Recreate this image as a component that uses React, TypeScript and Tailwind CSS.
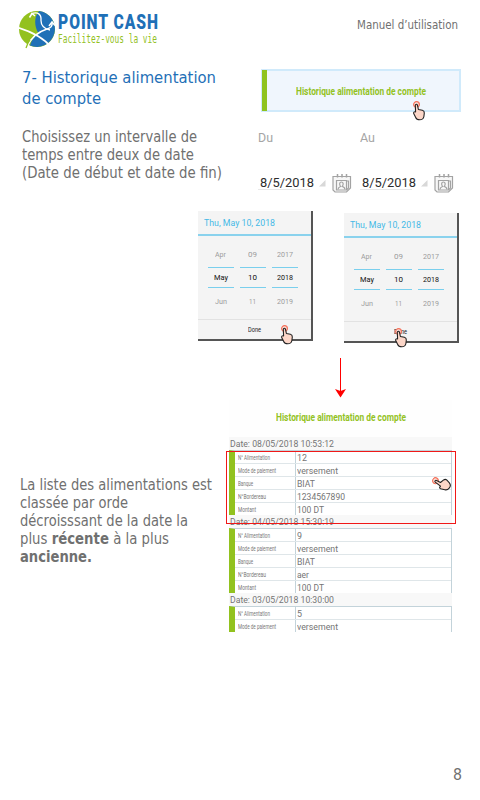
import { useLayoutEffect, useRef, useState } from "react";
import type { ReactNode } from "react";

const TAHOMA = "font-['DejaVu_Sans','Noto_Sans',sans-serif]";
const ROBOTO = "font-[Roboto,sans-serif]";

/** One line of text, condensed or widened horizontally to span `w` pixels. */
function Fit({ w, className = "", children }: { w: number; className?: string; children: ReactNode }) {
  const ref = useRef<HTMLSpanElement>(null);
  const [k, setK] = useState(1);
  useLayoutEffect(() => {
    const measure = () => {
      if (ref.current && ref.current.offsetWidth) {
        const probe = document.createRange();
        probe.selectNodeContents(ref.current);
        const before = ref.current.style.transform;
        ref.current.style.transform = "none";
        const natural = probe.getBoundingClientRect().width;
        ref.current.style.transform = before;
        setK(w / natural);
      }
    };
    measure();
    document.fonts?.ready.then(measure);
  }, [w]);
  return (
    <div className={`whitespace-nowrap ${className}`} style={{ width: w }}>
      <span ref={ref} className="inline-block origin-left align-top" style={{ transform: `scaleX(${k})` }}>
        {children}
      </span>
    </div>
  );
}

function Hand({ className }: { className: string }) {
  return (
    <svg className={`absolute ${className}`} width="14" height="20" viewBox="0 0 14 20">
      <circle cx="4.5" cy="3.6" r="2.900" fill="#fde0d8" stroke="#f4705a" strokeWidth="1.200" />
      <path
        d="M3.300 4.300c.1-1.300 1.900-1.400 2.200 0l.9 4.200 4 .8c1.400.4 2 1.300 1.900 2.700l-.4 3.500c-.4 2-1.900 3.300-4.200 3.300-2.100 0-3.400-.8-4-2.300L1.700 12.600c-.4-1.300.4-2.100 1.900-1.700Z"
        fill="#fcd6c8"
        stroke="#222"
        strokeWidth="1.100"
        strokeLinejoin="round"
      />
    </svg>
  );
}

function Logo() {
  return (
    <svg width="40" height="40" viewBox="0 0 40 40">
      <circle cx="19" cy="20" r="18" fill="#93c11f" />
      <path d="M21 2.100A18 18 0 1 1 12 36.600C14 30 17 27 20.500 24.500 16 17 16 8 21 2.100Z" fill="#1f70b7" />
      <path d="M0 18.500C13 22.500 25 28 33 38" fill="none" stroke="#fff" strokeWidth="1.700" />
      <path d="M9.500 37C14 27 21 22.500 29 20c4-1 5.500-3 5-6" fill="none" stroke="#fff" strokeWidth="1.600" />
      <path d="M13 5c7-3 10.500.5 10 6.500 0 5 2 8 9 9.500" fill="none" stroke="#fff" strokeWidth="1.300" />
      <path d="M11.500 8.500l2.500-4 3 2.500M31 17l3-4 3 3.500" fill="none" stroke="#fff" strokeWidth="1.500" />
      <path d="M8 39l2-5 2-3" fill="none" stroke="#93c11f" strokeWidth="1.300" />
    </svg>
  );
}

function CalendarIcon() {
  return (
    <svg width="20" height="20" viewBox="0 0 20 20" fill="none" stroke="#a3a3a3" strokeWidth="1.200">
      <path d="M1 3.500h17.500v11.500l-4 4H3l-2-2Z" fill="#f7f7f7" />
      <path d="M4.500 7.500h10v9.500h-10ZM14.500 8h2v7l-2 2" />
      <path d="M6 16.500c0-2 1-2.500 2.500-3-1.600-2.600-.8-4.500.9-4.500s2.500 1.900.9 4.500c1.600.5 2.600 1 2.600 3" />
      <path d="M5.500 1v3.500M10 1v3.500M14.500 1v3.500" strokeWidth="1.500" />
    </svg>
  );
}

function DateField({ label, lw }: { label: string; lw: number }) {
  return (
    <div className="w-[101.500px]">
      <Fit w={lw} className="h-5 text-[12.5px] leading-5 text-[#a5a5a5]">{label}</Fit>
      <div className="mt-[22px] flex h-6 items-start">
        <div className="mt-[4px] h-4 w-[52px] border-b border-[#e8e8e8]">
          <Fit w={54} className="ml-0.5 text-[13px] leading-[18px] text-[#2d2d2d]">8/5/2018</Fit>
        </div>
        <svg className="mt-[9px] ml-2 shrink-0" width="8" height="8"><path d="M7.500 1v6.500H1Z" fill="#d8d8d8" /></svg>
        <div className="mt-[3px] ml-[6px]"><CalendarIcon /></div>
      </div>
    </div>
  );
}

function Wheel({ values, widths }: { values: string[]; widths: number[] }) {
  return (
    <div className="flex w-[25.500px] flex-col items-center text-[7.5px]">
      <Fit w={widths[0]} className="h-[23px] leading-[21px] text-[#9c9c9c]">{values[0]}</Fit>
      <div className="flex h-[21px] w-full justify-center border-y border-[#7acfed]">
        <Fit w={widths[1]} className="leading-[19px] text-[#111]">{values[1]}</Fit>
      </div>
      <Fit w={widths[2]} className="mt-[4px] leading-[20px] text-[#9c9c9c]">{values[2]}</Fit>
    </div>
  );
}

function Picker() {
  return (
    <div className={`h-[130px] w-[115px] border-r-2 border-b-2 border-[#555] bg-[#f4f4f4] ${ROBOTO}`}>
      <div className="h-[25px] border-b-2 border-[#8ad2ed] pt-[3px] pl-1.5">
        <Fit w={71} className="text-[9px] leading-[18px] text-[#45b9e6]">Thu, May 10, 2018</Fit>
      </div>
      <div className="flex h-[84px] gap-[6.500px] border-b border-[#e2e2e2] pt-[8px] pl-[10px]">
        <Wheel values={["Apr", "May", "Jun"]} widths={[11, 14, 12]} />
        <Wheel values={["09", "10", "11"]} widths={[9, 9, 7]} />
        <Wheel values={["2017", "2018", "2019"]} widths={[16, 16, 16]} />
      </div>
      <div className="flex justify-center">
        <Fit w={13} className="text-[6.5px] leading-[20px] text-[#222]">Done</Fit>
      </div>
    </div>
  );
}

type Cell = [string, number, string, number];

function Entry({ date, rows }: { date: string; rows: Cell[] }) {
  return (
    <div>
      <div className="h-[13px] bg-[#f8f8f8] pl-px">
        <Fit w={104} className="text-[9.5px] leading-[13px] text-[#757575]">{date}</Fit>
      </div>
      <div className="border-t border-r border-l-[6px] border-t-[#c3d3da] border-r-[#c3d3da] border-l-[#92c21f] bg-white">
        {rows.map(([label, lw, value, vw]) => (
          <div key={label} className="flex h-[13px] border-b border-[#dfe6e9]">
            <div className="w-[61px] border-r border-[#c3d3da] pl-[3px]">
              <Fit w={lw} className="text-[8px] leading-[13px] text-[#777]">{label}</Fit>
            </div>
            <Fit w={vw} className="ml-px text-[9.5px] leading-[13px] text-[#757575]">{value}</Fit>
          </div>
        ))}
      </div>
    </div>
  );
}

const entry = (n: string, border: string, bw: number): Cell[] => [
  ["N° Alimentation", 32, n, n.length * 5],
  ["Mode de paiement", 38, "versement", 41],
  ["Banque", 15, "BIAT", 18],
  ["N°Bordereau", 28, border, bw],
  ["Montant", 18, "100 DT", 27],
];

export default function App() {
  return (
    <div className={`relative flex h-[800px] w-[480px] flex-col overflow-hidden bg-white text-[#707070] ${TAHOMA}`}>
      <header className="flex h-[60px] shrink-0 pl-[18px]">
        <div className="pt-[9px]"><Logo /></div>
        <div className="w-[299px] pt-[14px]">
          <Fit w={101} className="h-[18px] font-[Roboto,sans-serif] text-[19.5px] leading-[18px] font-black tracking-[1.2px] text-[#1f70b7]">POINT CASH</Fit>
          <Fit w={99} className="font-['DejaVu_Sans_Mono',monospace] text-[11.5px] leading-[14px] text-[#93c11f]">Facilitez-vous la vie</Fit>
        </div>
        <Fit w={101} className="pt-[15px] text-[12.5px] leading-[19px]">Manuel d’utilisation</Fit>
      </header>

      <section className="flex h-[151px] shrink-0 pl-[22px]">
        <div className="w-[236px] pt-[7px]">
          <h1 className="text-[16px] leading-[21px] text-[#1f70b7]">
            <Fit w={194}>7- Historique alimentation</Fit>
            <Fit w={79}>de compte</Fit>
          </h1>
          <div className="mt-[19px] text-[15px] leading-[18px]">
            <Fit w={175}>Choisissez un intervalle de</Fit>
            <Fit w={172}>temps entre deux de date</Fit>
            <Fit w={200}>(Date de début et date de fin)</Fit>
          </div>
        </div>
        <div className={`pt-[9px] ${ROBOTO}`}>
          <div className="ml-[3px] flex h-[43px] w-[200px] border-2 border-[#d0eafb] bg-[#f0f6fd]">
            <div className="-my-px -ml-px w-[5px] bg-[#8fc31f]" />
            <Fit w={130} className="ml-[29px] text-[10.5px] leading-[41px] font-bold text-[#93c21f]">Historique alimentation de compte</Fit>
          </div>
          <div className="mt-[16px] flex">
            <DateField label="Du" lw={15} />
            <DateField label="Au" lw={15} />
          </div>
        </div>
      </section>

      <section className="flex h-[147px] shrink-0 gap-[31px] pl-[198px]">
        <Picker />
        <div className="pt-[2px]"><Picker /></div>
      </section>

      <div className="flex h-[42px] shrink-0 pl-[335px]">
        <svg width="11" height="40" viewBox="0 0 11 40">
          <path d="M5.500 0v34" stroke="#f00" />
          <path d="M0 31l5.500 2L11 31 5.500 39.500Z" fill="#f00" />
        </svg>
      </div>

      <section className="flex h-[232px] shrink-0 pl-[20px]">
        <div className="w-[209px] pt-[76px] text-[15px] leading-[18px]">
          <Fit w={192}>La liste des alimentations est</Fit>
          <Fit w={108}>classée par orde</Fit>
          <Fit w={168}>décroisssant de la date la</Fit>
          <Fit w={149}>plus <b>récente</b> à la plus</Fit>
          <Fit w={72}><b>ancienne.</b></Fit>
        </div>
        <div className={`h-[232px] w-[223px] overflow-hidden bg-[#fefefe] ${ROBOTO}`}>
          <div className="flex h-[37px] justify-center pt-[8px]">
            <Fit w={130} className="text-[10.5px] leading-[19px] font-bold text-[#93c21f]">Historique alimentation de compte</Fit>
          </div>
          <div className="flex flex-col">
            <Entry date="Date: 08/05/2018 10:53:12" rows={entry("12", "1234567890", 48)} />
            <div className="-mt-px"><Entry date="Date: 04/05/2018 15:30:19" rows={entry("9", "aer", 12)} /></div>
            <div className="-mt-px"><Entry date="Date: 03/05/2018 10:30:00" rows={entry("5", "", 12).slice(0, 2)} /></div>
          </div>
        </div>
      </section>

      <footer className="flex grow items-end justify-end pr-[18px] pb-[14px]">
        <Fit w={9} className="text-[16px] leading-[22px]">8</Fit>
      </footer>

      <div className="absolute top-[451px] left-[226px] h-[73px] w-[230px] border border-[#f01818]" />
      <Hand className="top-[101px] left-[412px]" />
      <Hand className="top-[325px] left-[280px]" />
      <Hand className="top-[328px] left-[394px]" />
      <Hand className="top-[473px] left-[435px] -rotate-50" />
    </div>
  );
}
